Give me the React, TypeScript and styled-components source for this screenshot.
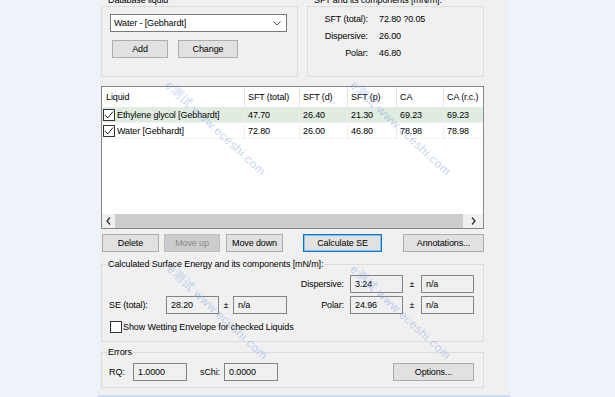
import React from 'react';
import styled, { createGlobalStyle, css } from 'styled-components';

const Global = createGlobalStyle`
  html, body { margin: 0; padding: 0; background: #eef2fa; }
  body {
    font-family: "Liberation Sans", Arial, sans-serif;
    font-size: 9px;
    letter-spacing: -0.12px;
    color: #000;
    overflow: hidden;
  }
  * { box-sizing: border-box; }
`;

const Page = styled.div`
  position: relative;
  width: 615px;
  height: 397px;
  display: flex;
  flex-direction: column;
  padding-left: 100px;
  overflow: hidden;
`;

const Window = styled.div`
  width: 408px;
  height: 395px;
  background: #f0f0f0;
  padding: 6px 24px 0 1px;
  display: flex;
  flex-direction: column;
`;

const BottomLine = styled.div`
  width: 412px;
  margin-left: -2px;
  height: 2px;
  background: #c9ddf6;
`;

const Group = styled.div<{ $w?: number; $h: number; $mt?: number }>`
  position: relative;
  border: 1px solid #dcdcdc;
  height: ${p => p.$h}px;
  margin-top: ${p => p.$mt ?? 0}px;
  flex: none;
  ${p => p.$w && css`width: ${p.$w}px;`}
`;

const Legend = styled.span<{ $cut?: boolean }>`
  position: absolute;
  left: 5px;
  top: ${p => (p.$cut ? -12 : -6)}px;
  padding: 0 1px;
  line-height: 11px;
  background: #f0f0f0;
  white-space: nowrap;
`;

const TopRow = styled.div`
  display: flex;
  gap: 9px;
`;

const DbBody = styled.div`
  display: flex;
  flex-direction: column;
  padding: 7px 0 0 8px;
  gap: 8px;
`;

const Combo = styled.div`
  width: 177px;
  height: 18px;
  background: #fff;
  border: 1px solid #7a7a7a;
  display: flex;
  align-items: center;
  justify-content: space-between;
  padding: 0 5px 0 3px;
`;

const BtnRow = styled.div<{ $gap?: number }>`
  display: flex;
  align-items: center;
  gap: ${p => p.$gap ?? 10}px;
`;

const Button = styled.button<{ $w: number; $ml?: number; $focus?: boolean }>`
  width: ${p => p.$w}px;
  height: 18px;
  margin-left: ${p => p.$ml ?? 0}px;
  padding: 0;
  background: #e1e1e1;
  border: 1px solid #adadad;
  font-family: inherit;
  font-size: 9px;
  letter-spacing: inherit;
  color: #000;
  display: flex;
  align-items: center;
  justify-content: center;
  flex: none;
  &:disabled {
    background: #cccccc;
    border-color: #bfbfbf;
    color: #8a8a8a;
  }
  ${p => p.$focus && css`
    border-color: #0078d7;
    box-shadow: inset 0 0 0 1px rgba(0, 120, 215, 0.35);
  `}
`;

const SftGrid = styled.div`
  display: grid;
  grid-template-columns: 60px auto;
  column-gap: 11px;
  grid-auto-rows: 17px;
  align-items: center;
  padding-top: 3px;
`;

const RLabel = styled.span<{ $pr?: number }>`
  text-align: right;
  white-space: nowrap;
  padding-right: ${p => p.$pr ?? 0}px;
`;

const List = styled.div`
  margin-top: 9px;
  height: 143px;
  flex: none;
  border: 1px solid #828790;
  background: #fff;
  display: flex;
  flex-direction: column;
  overflow: hidden;
`;

const COLS = '143px 55px 48px 49px 47px 60px';

const HeadRow = styled.div`
  display: grid;
  grid-template-columns: ${COLS};
  height: 20px;
  flex: none;
`;

const HeadCell = styled.div<{ $first?: boolean }>`
  display: flex;
  align-items: center;
  padding-left: ${p => (p.$first ? 4 : 3)}px;
  border-right: 1px solid #e5e5e5;
  white-space: nowrap;
`;

const DataRow = styled.div<{ $sel?: boolean }>`
  display: grid;
  grid-template-columns: ${COLS};
  height: 16px;
  flex: none;
  background: ${p => (p.$sel ? '#e0ece0' : '#fff')};
  border-bottom: 1px solid #f2f2f2;
`;

const Cell = styled.div<{ $first?: boolean }>`
  display: flex;
  align-items: center;
  gap: 2px;
  padding-left: ${p => (p.$first ? 1 : 3)}px;
  border-right: 1px solid #ededed;
  white-space: nowrap;
`;

const Check = styled.span`
  width: 12px;
  height: 12px;
  border: 1px solid #333;
  background: #fff;
  display: inline-flex;
  align-items: center;
  justify-content: center;
  flex: none;
`;

const Filler = styled.div`
  flex: 1;
`;

const HScroll = styled.div`
  height: 14px;
  flex: none;
  display: flex;
  background: #e8e8e8;
`;

const Arrow = styled.div<{ $w: number }>`
  width: ${p => p.$w}px;
  display: flex;
  align-items: center;
  justify-content: center;
  background: #f0f0f0;
  flex: none;
`;

const Thumb = styled.div`
  flex: 1;
  background: #cdcdcd;
`;

const ActionRow = styled.div`
  display: flex;
  margin-top: 5px;
  flex: none;
`;

const CalcGrid = styled.div`
  display: grid;
  grid-template-columns: 57px 53px 14px 54px 1fr 53px 18px 53px;
  grid-template-rows: 18px 18px;
  row-gap: 3px;
  align-items: center;
  padding: 10px 9px 0 7px;
`;

const Blank = styled.span`
  grid-column: 1 / 5;
`;

const Field = styled.div<{ $w?: number }>`
  height: 18px;
  background: #f0f0f0;
  border: 1px solid #838383;
  display: flex;
  align-items: center;
  padding: 0 0 1px 4px;
  ${p => p.$w && css`width: ${p.$w}px; flex: none;`}
`;

const PM = styled.span`
  text-align: center;
`;

const CheckRow = styled.div`
  display: flex;
  align-items: center;
  gap: 1px;
  margin: 7px 0 0 8px;
`;

const ErrRow = styled.div`
  display: flex;
  align-items: center;
  padding: 10px 9px 0 7px;
`;

const ErrLabel = styled.span<{ $w: number; $pl?: number }>`
  width: ${p => p.$w}px;
  padding-left: ${p => p.$pl ?? 0}px;
  flex: none;
`;

const Spacer = styled.div`
  flex: 1;
`;

const Watermark = styled.div<{ $x: number; $y: number }>`
  position: absolute;
  left: ${p => p.$x}px;
  top: ${p => p.$y}px;
  transform-origin: 0 0;
  transform: rotate(43deg);
  font-family: "Liberation Sans", "Noto Sans CJK SC", sans-serif;
  font-size: 12px;
  letter-spacing: 0.5px;
  color: rgba(120, 160, 230, 0.45);
  white-space: nowrap;
  pointer-events: none;
`;

const CheckMark = () => (
  <svg width="10" height="10" viewBox="0 0 10 10">
    <path d="M1 5.2 L3.8 8 L9 1.5" fill="none" stroke="#222" strokeWidth="1" />
  </svg>
);

const Chevron = ({ dir }: { dir: 'down' | 'left' | 'right' }) => {
  if (dir === 'down')
    return (
      <svg width="8" height="5" viewBox="0 0 8 5">
        <path d="M0.5 0.5 L4 4 L7.5 0.5" fill="none" stroke="#555" strokeWidth="1" />
      </svg>
    );
  const d = dir === 'left' ? 'M4 0.5 L1 4 L4 7.5' : 'M1 0.5 L4 4 L1 7.5';
  return (
    <svg width="5" height="8" viewBox="0 0 5 8">
      <path d={d} fill="none" stroke="#333" strokeWidth="1.3" />
    </svg>
  );
};

const rows = [
  { name: 'Ethylene glycol [Gebhardt]', v: ['47.70', '26.40', '21.30', '69.23', '69.23'], sel: true },
  { name: 'Water [Gebhardt]', v: ['72.80', '26.00', '46.80', '78.98', '78.98'], sel: false },
];

export default function App() {
  return (
    <Page>
      <Global />
      <Window>
        <TopRow>
          <Group $w={197} $h={71}>
            <Legend $cut>Database liquid</Legend>
            <DbBody>
              <Combo>
                <span>Water - [Gebhardt]</span>
                <Chevron dir="down" />
              </Combo>
              <BtnRow $gap={10}>
                <Button $w={56} $ml={2}>Add</Button>
                <Button $w={60}>Change</Button>
              </BtnRow>
            </DbBody>
          </Group>
          <Group $w={177} $h={71}>
            <Legend $cut>SFT and its components [mN/m]:</Legend>
            <SftGrid>
              <RLabel>SFT (total):</RLabel>
              <span>72.80 ?0.05</span>
              <RLabel>Dispersive:</RLabel>
              <span>26.00</span>
              <RLabel>Polar:</RLabel>
              <span>46.80</span>
            </SftGrid>
          </Group>
        </TopRow>

        <List>
          <HeadRow>
            <HeadCell $first>Liquid</HeadCell>
            <HeadCell>SFT (total)</HeadCell>
            <HeadCell>SFT (d)</HeadCell>
            <HeadCell>SFT (p)</HeadCell>
            <HeadCell>CA</HeadCell>
            <HeadCell>CA (r.c.)</HeadCell>
          </HeadRow>
          {rows.map(r => (
            <DataRow key={r.name} $sel={r.sel}>
              <Cell $first>
                <Check><CheckMark /></Check>
                {r.name}
              </Cell>
              {r.v.map((v, i) => (
                <Cell key={i}>{v}</Cell>
              ))}
            </DataRow>
          ))}
          <Filler />
          <HScroll>
            <Arrow $w={13}><Chevron dir="left" /></Arrow>
            <Thumb />
            <Arrow $w={20}><Chevron dir="right" /></Arrow>
          </HScroll>
        </List>

        <ActionRow>
          <Button $w={57} $ml={1}>Delete</Button>
          <Button $w={56} $ml={5} disabled>Move up</Button>
          <Button $w={57} $ml={6}>Move down</Button>
          <Button $w={79} $ml={20} $focus>Calculate SE</Button>
          <Button $w={81} $ml={21}>Annotations...</Button>
        </ActionRow>

        <Group $h={78} $mt={12}>
          <Legend>Calculated Surface Energy and its components [mN/m]:</Legend>
          <CalcGrid>
            <Blank />
            <RLabel $pr={6}>Dispersive:</RLabel>
            <Field>3.24</Field>
            <PM>±</PM>
            <Field>n/a</Field>
            <span>SE (total):</span>
            <Field>28.20</Field>
            <PM>±</PM>
            <Field>n/a</Field>
            <RLabel $pr={6}>Polar:</RLabel>
            <Field>24.96</Field>
            <PM>±</PM>
            <Field>n/a</Field>
          </CalcGrid>
          <CheckRow>
            <Check />
            <span>Show Wetting Envelope for checked Liquids</span>
          </CheckRow>
        </Group>

        <Group $h={36} $mt={10}>
          <Legend>Errors</Legend>
          <ErrRow>
            <ErrLabel $w={24}>RQ:</ErrLabel>
            <Field $w={54}>1.0000</Field>
            <ErrLabel $w={37} $pl={13}>sChi:</ErrLabel>
            <Field $w={54}>0.0000</Field>
            <Spacer />
            <Button $w={81}>Options...</Button>
          </ErrRow>
        </Group>
      </Window>
      <BottomLine />

      <Watermark $x={174} $y={76}>e测试 www.eceshi.com</Watermark>
      <Watermark $x={359} $y={76}>e测试 www.eceshi.com</Watermark>
      <Watermark $x={176} $y={260}>e测试 www.eceshi.com</Watermark>
      <Watermark $x={359} $y={260}>e测试 www.eceshi.com</Watermark>
    </Page>
  );
}
